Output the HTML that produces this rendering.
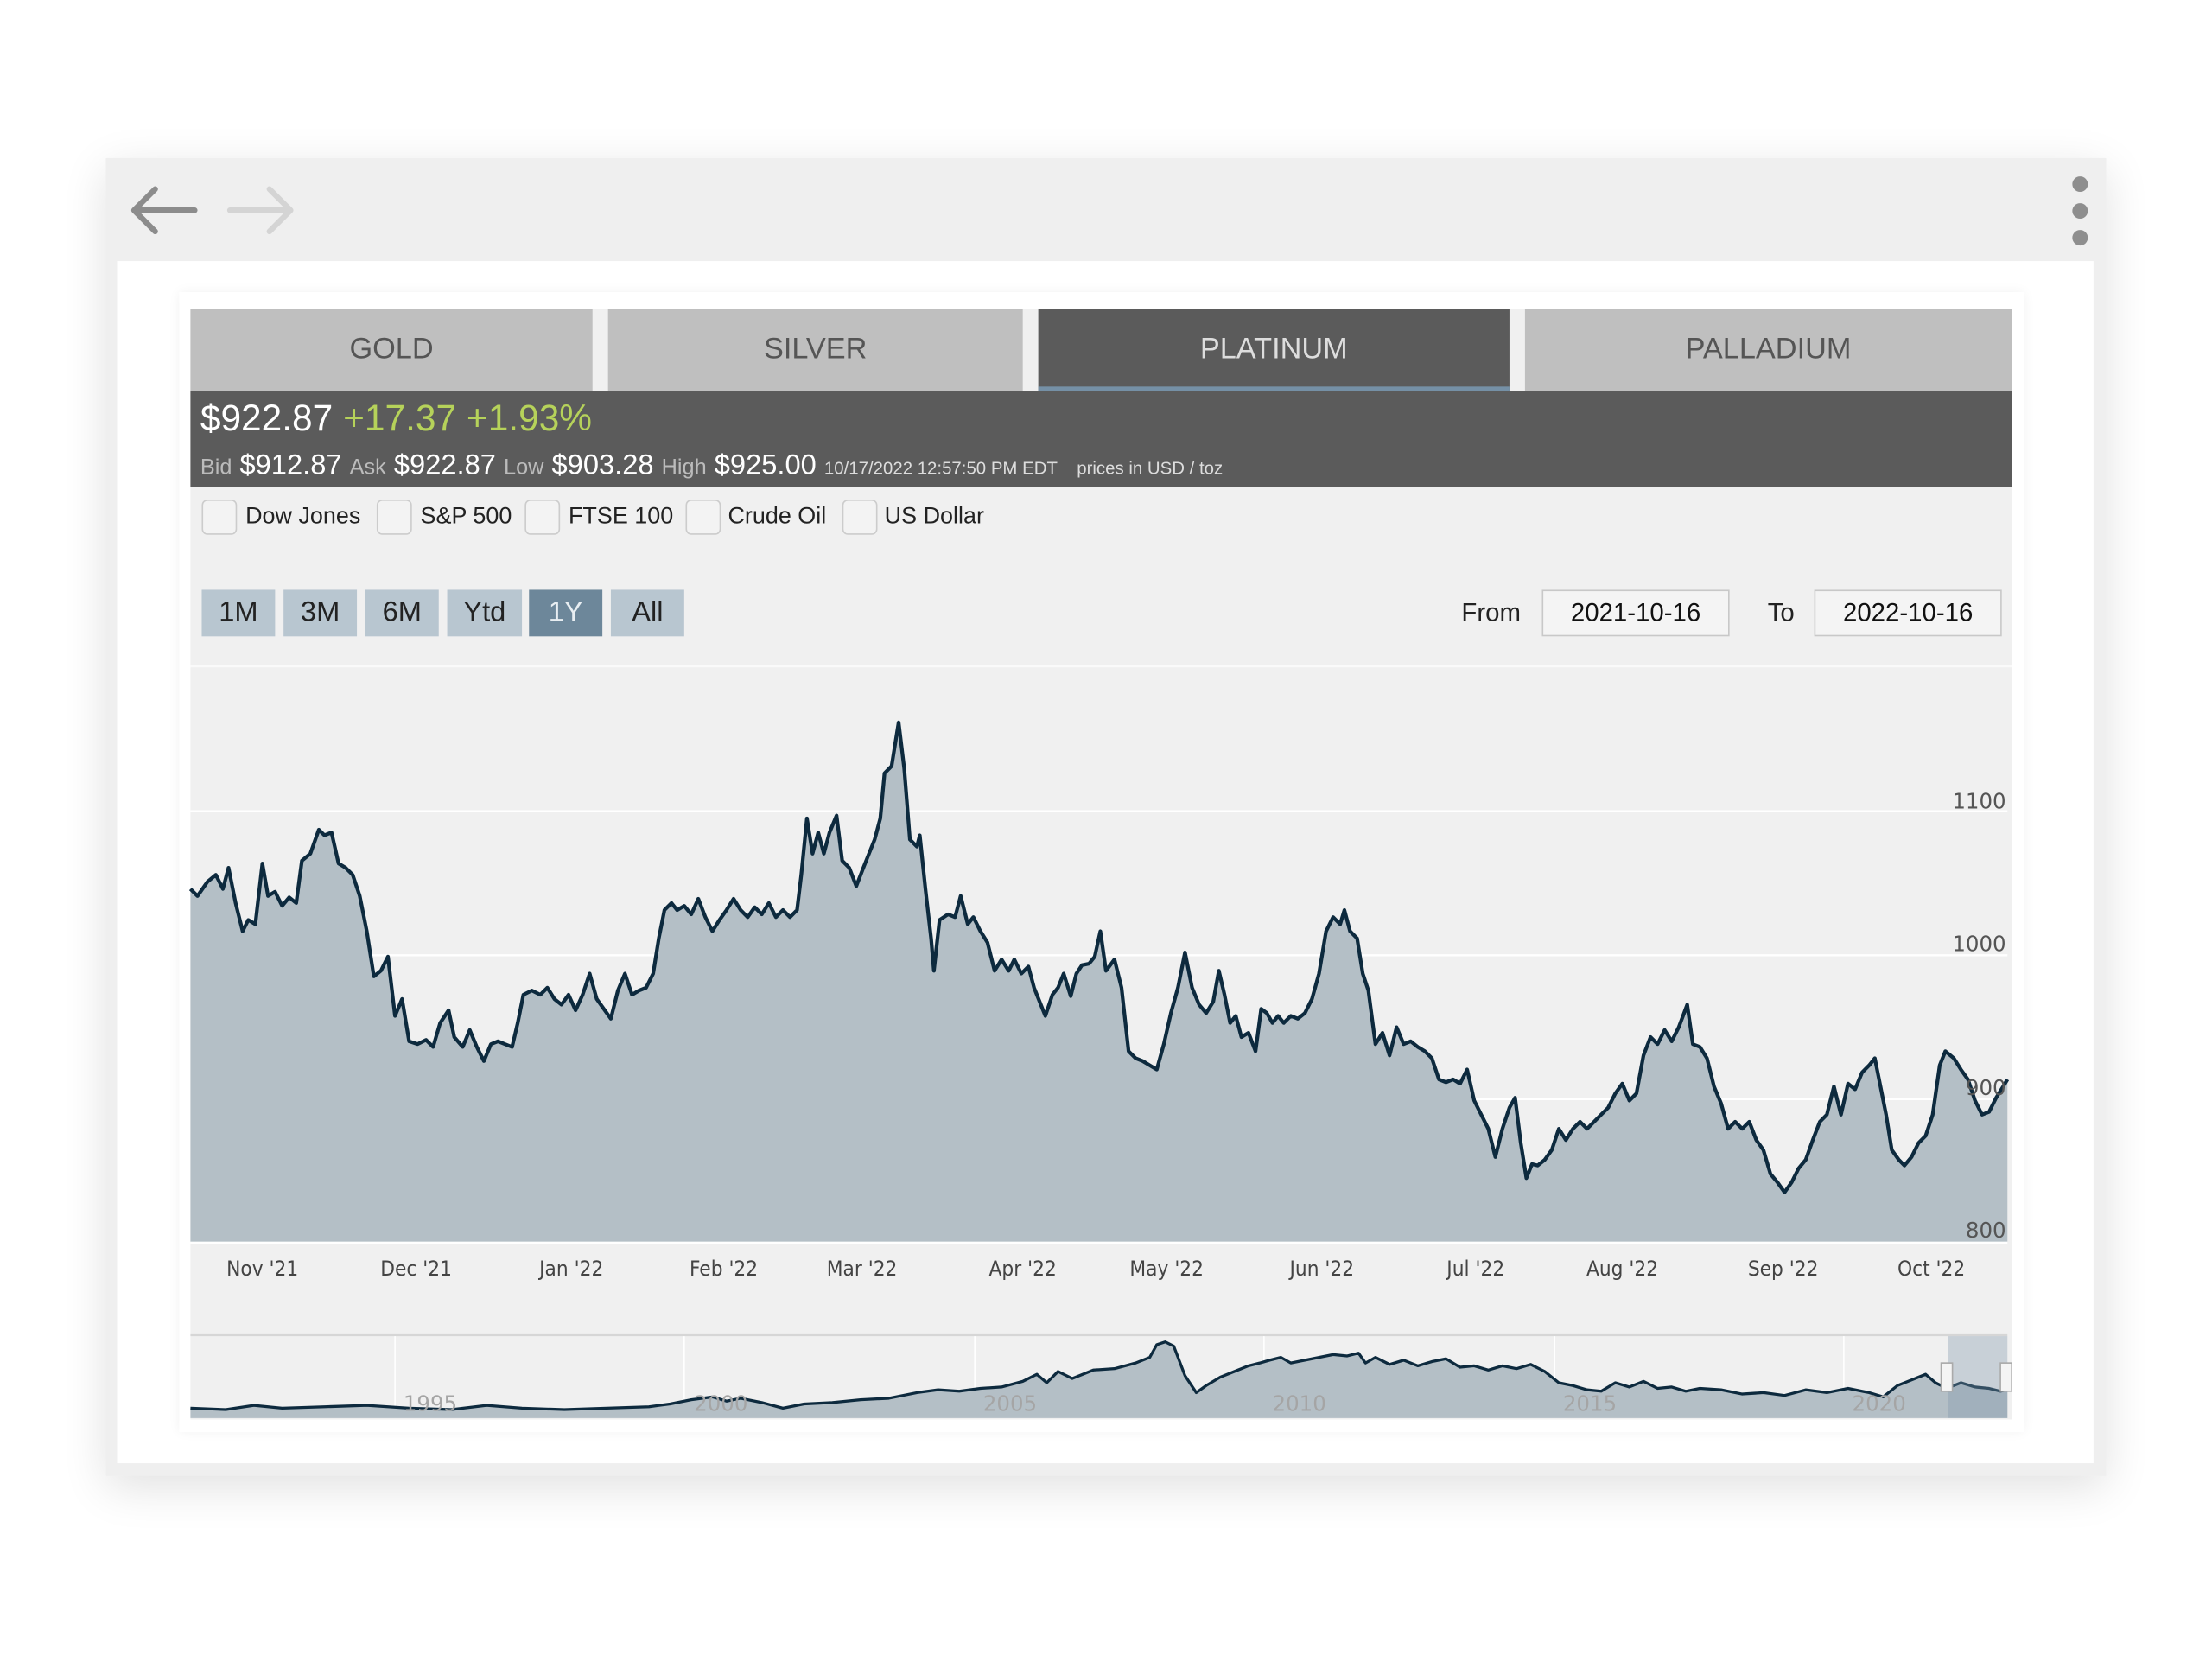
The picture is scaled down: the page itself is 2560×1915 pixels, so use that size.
<!DOCTYPE html>
<html><head><meta charset="utf-8"><style>
*{margin:0;padding:0;box-sizing:border-box}
html,body{width:2560px;height:1914px;overflow:hidden;background:#fff}
#s{position:absolute;left:0;top:0;width:1568px;height:1173px;transform:scale(1.63265);transform-origin:0 0;font-family:"Liberation Sans",Arial,sans-serif}
.a{position:absolute}
.frame{left:75px;top:112px;width:1418px;height:934px;background:#efefef;box-shadow:0 8px 30px rgba(0,0,0,.12)}
.content{left:83px;top:185px;width:1401px;height:852px;background:#fff}
.widget{left:127px;top:207px;width:1308px;height:808px;background:#fff;box-shadow:0 0 8px rgba(0,0,0,.06)}
.panel{left:135px;top:219px;width:1291px;height:787px;background:#f0f0f0}
.tab{top:219px;height:58px;background:#bfbfbf;color:#555;font-size:21px;text-align:center;line-height:58px}
.bar{left:135px;top:277px;width:1291px;height:68px;background:#5b5b5b}
.cb{top:354px;width:25px;height:25px;border:1px solid #ccc;border-radius:4px;background:#f3f3f3}
.cl{top:357px;font-size:16.5px;color:#222}
.rb{top:418px;width:52px;height:33px;background:#b8c6d0;color:#222;font-size:20px;text-align:center;line-height:33px}
.inp{top:418px;width:133px;height:33px;border:1px solid #c8c8c8;background:#f4f4f4;font-size:18px;text-align:center;line-height:31px;color:#111}
.xl{top:892px;font-family:"DejaVu Sans",sans-serif;font-size:14.5px;color:#444;transform:translateX(-50%) scaleX(.92);white-space:nowrap}
</style></head><body><div id="s">
<div class="a frame"></div>
<svg class="a" style="left:90px;top:128px" width="140" height="44" viewBox="0 0 140 44">
<path d="M48 21H6M20 6L5 21L20 36" stroke="#8c8c8c" stroke-width="4" fill="none" stroke-linecap="round" stroke-linejoin="round"/>
<path d="M73 21H115M101 6L116 21L101 36" stroke="#d4d4d4" stroke-width="4" fill="none" stroke-linecap="round" stroke-linejoin="round"/>
</svg>
<div class="a" style="left:1469px;top:125px;width:11px;height:11px;border-radius:50%;background:#8e8e8e"></div>
<div class="a" style="left:1469px;top:144px;width:11px;height:11px;border-radius:50%;background:#8e8e8e"></div>
<div class="a" style="left:1469px;top:163px;width:11px;height:11px;border-radius:50%;background:#8e8e8e"></div>
<div class="a content"></div>
<div class="a widget"></div>
<div class="a panel"></div>
<div class="a tab" style="left:135px;width:285px">GOLD</div>
<div class="a tab" style="left:431px;width:294px">SILVER</div>
<div class="a tab" style="left:736px;width:334px;background:#5b5b5b;color:#ddd;border-bottom:3px solid #7590a6">PLATINUM</div>
<div class="a tab" style="left:1081px;width:345px">PALLADIUM</div>
<div class="a bar"></div>
<div class="a" style="left:142px;top:281px;font-size:26px;color:#fff;white-space:nowrap">$922.87 <span style="color:#b6d25a">+17.37 +1.93%</span></div>
<div class="a" style="left:142px;top:319px;color:#fff;white-space:nowrap;font-size:20px"><span style="font-size:15.5px;color:#bbb">Bid</span> $912.87 <span style="font-size:15.5px;color:#bbb">Ask</span> $922.87 <span style="font-size:15.5px;color:#bbb">Low</span> $903.28 <span style="font-size:15.5px;color:#bbb">High</span> $925.00 <span style="font-size:12.5px;color:#ddd">10/17/2022 12:57:50 PM EDT &nbsp;&nbsp; prices in USD / toz</span></div>
<div class="a cb" style="left:143px"></div><div class="a cl" style="left:174px">Dow Jones</div>
<div class="a cb" style="left:267px"></div><div class="a cl" style="left:298px">S&amp;P 500</div>
<div class="a cb" style="left:372px"></div><div class="a cl" style="left:403px">FTSE 100</div>
<div class="a cb" style="left:486px"></div><div class="a cl" style="left:516px">Crude Oil</div>
<div class="a cb" style="left:597px"></div><div class="a cl" style="left:627px">US Dollar</div>
<div class="a rb" style="left:143px">1M</div>
<div class="a rb" style="left:201px">3M</div>
<div class="a rb" style="left:259px">6M</div>
<div class="a rb" style="left:317px;width:53px">Ytd</div>
<div class="a rb" style="left:375px;background:#6d879a;color:#e8eef2">1Y</div>
<div class="a rb" style="left:433px">All</div>
<div class="a" style="left:1036px;top:424px;font-size:18px;color:#222">From</div>
<div class="a inp" style="left:1093px">2021-10-16</div>
<div class="a" style="left:1253px;top:424px;font-size:18px;color:#222">To</div>
<div class="a inp" style="left:1286px">2022-10-16</div>
<div class="a" style="left:135px;top:471px;width:1291px;height:2px;background:#fafafa"></div>
<svg class="a" style="left:0;top:0" width="1568" height="1173" viewBox="0 0 1568 1173">
<g stroke="#fff" stroke-width="1.5"><line x1="135" y1="575" x2="1423" y2="575"/><line x1="135" y1="677" x2="1423" y2="677"/><line x1="135" y1="779" x2="1423" y2="779"/></g>
<path fill="#b4bfc6" stroke="none" d="M135 880 L135 630 L140 635 L147 625 L153 620 L158 630 L162 615 L167 640 L172 660 L176 652 L181 655 L186 612 L190 635 L195 632 L200 642 L205 636 L210 640 L214 610 L220 605 L226 588 L230 592 L235 590 L240 612 L245 615 L250 620 L255 635 L260 660 L265 692 L270 688 L275 678 L280 720 L285 708 L290 738 L296 740 L302 737 L307 742 L312 725 L318 716 L322 735 L328 742 L333 730 L338 742 L343 752 L348 740 L353 738 L358 740 L363 742 L367 725 L371 705 L377 702 L383 705 L388 700 L393 708 L398 712 L403 705 L408 716 L413 705 L418 690 L423 708 L428 715 L433 722 L438 702 L443 690 L448 705 L453 702 L458 700 L463 690 L467 665 L471 645 L476 640 L480 645 L485 642 L490 648 L495 637 L500 650 L505 660 L510 652 L515 645 L520 637 L525 645 L530 650 L535 643 L540 648 L545 640 L550 650 L555 645 L560 650 L565 645 L568 620 L572 580 L576 605 L580 590 L584 605 L588 590 L593 578 L597 610 L602 615 L607 628 L612 615 L616 605 L620 595 L624 580 L627 548 L632 543 L637 512 L641 545 L645 595 L650 600 L652 592 L656 630 L660 665 L662 688 L666 652 L672 648 L677 650 L681 635 L686 655 L690 650 L695 660 L700 668 L705 688 L710 680 L715 688 L719 680 L724 690 L729 685 L733 700 L737 710 L741 720 L746 705 L750 700 L754 690 L759 706 L763 690 L767 684 L772 683 L776 678 L780 660 L784 688 L790 680 L795 700 L800 745 L805 750 L810 752 L815 755 L820 758 L825 740 L830 718 L835 700 L840 675 L845 700 L850 712 L855 718 L860 710 L864 688 L868 705 L872 725 L876 720 L880 735 L885 732 L890 745 L894 715 L898 718 L902 725 L906 720 L910 725 L915 720 L920 722 L925 718 L930 708 L935 690 L940 660 L945 650 L950 655 L953 645 L957 660 L962 665 L966 690 L970 702 L975 740 L980 732 L985 748 L990 728 L995 740 L1000 738 L1005 742 L1010 745 L1015 750 L1020 765 L1025 767 L1030 765 L1035 768 L1040 758 L1045 780 L1050 790 L1055 800 L1060 820 L1065 800 L1070 785 L1074 778 L1078 810 L1082 835 L1086 825 L1090 826 L1095 822 L1100 815 L1105 800 L1110 808 L1115 800 L1120 795 L1125 800 L1130 795 L1135 790 L1140 785 L1145 775 L1150 768 L1155 780 L1160 775 L1165 748 L1170 735 L1175 740 L1180 730 L1185 738 L1190 728 L1196 712 L1200 740 L1205 742 L1210 750 L1215 770 L1220 782 L1225 800 L1230 795 L1235 800 L1240 795 L1245 808 L1250 815 L1255 832 L1260 838 L1265 845 L1270 838 L1275 828 L1280 822 L1285 808 L1290 795 L1295 790 L1300 770 L1305 790 L1310 768 L1315 772 L1320 760 L1325 755 L1329 750 L1333 770 L1337 790 L1341 815 L1346 822 L1350 826 L1355 820 L1360 810 L1365 805 L1370 790 L1375 755 L1379 745 L1385 750 L1390 758 L1395 765 L1400 780 L1405 790 L1410 788 L1415 778 L1420 770 L1423 765 L1423 880 Z"/>
<path fill="none" stroke="#0d2a3e" stroke-width="2.6" stroke-linejoin="round" d="M135 630 L140 635 L147 625 L153 620 L158 630 L162 615 L167 640 L172 660 L176 652 L181 655 L186 612 L190 635 L195 632 L200 642 L205 636 L210 640 L214 610 L220 605 L226 588 L230 592 L235 590 L240 612 L245 615 L250 620 L255 635 L260 660 L265 692 L270 688 L275 678 L280 720 L285 708 L290 738 L296 740 L302 737 L307 742 L312 725 L318 716 L322 735 L328 742 L333 730 L338 742 L343 752 L348 740 L353 738 L358 740 L363 742 L367 725 L371 705 L377 702 L383 705 L388 700 L393 708 L398 712 L403 705 L408 716 L413 705 L418 690 L423 708 L428 715 L433 722 L438 702 L443 690 L448 705 L453 702 L458 700 L463 690 L467 665 L471 645 L476 640 L480 645 L485 642 L490 648 L495 637 L500 650 L505 660 L510 652 L515 645 L520 637 L525 645 L530 650 L535 643 L540 648 L545 640 L550 650 L555 645 L560 650 L565 645 L568 620 L572 580 L576 605 L580 590 L584 605 L588 590 L593 578 L597 610 L602 615 L607 628 L612 615 L616 605 L620 595 L624 580 L627 548 L632 543 L637 512 L641 545 L645 595 L650 600 L652 592 L656 630 L660 665 L662 688 L666 652 L672 648 L677 650 L681 635 L686 655 L690 650 L695 660 L700 668 L705 688 L710 680 L715 688 L719 680 L724 690 L729 685 L733 700 L737 710 L741 720 L746 705 L750 700 L754 690 L759 706 L763 690 L767 684 L772 683 L776 678 L780 660 L784 688 L790 680 L795 700 L800 745 L805 750 L810 752 L815 755 L820 758 L825 740 L830 718 L835 700 L840 675 L845 700 L850 712 L855 718 L860 710 L864 688 L868 705 L872 725 L876 720 L880 735 L885 732 L890 745 L894 715 L898 718 L902 725 L906 720 L910 725 L915 720 L920 722 L925 718 L930 708 L935 690 L940 660 L945 650 L950 655 L953 645 L957 660 L962 665 L966 690 L970 702 L975 740 L980 732 L985 748 L990 728 L995 740 L1000 738 L1005 742 L1010 745 L1015 750 L1020 765 L1025 767 L1030 765 L1035 768 L1040 758 L1045 780 L1050 790 L1055 800 L1060 820 L1065 800 L1070 785 L1074 778 L1078 810 L1082 835 L1086 825 L1090 826 L1095 822 L1100 815 L1105 800 L1110 808 L1115 800 L1120 795 L1125 800 L1130 795 L1135 790 L1140 785 L1145 775 L1150 768 L1155 780 L1160 775 L1165 748 L1170 735 L1175 740 L1180 730 L1185 738 L1190 728 L1196 712 L1200 740 L1205 742 L1210 750 L1215 770 L1220 782 L1225 800 L1230 795 L1235 800 L1240 795 L1245 808 L1250 815 L1255 832 L1260 838 L1265 845 L1270 838 L1275 828 L1280 822 L1285 808 L1290 795 L1295 790 L1300 770 L1305 790 L1310 768 L1315 772 L1320 760 L1325 755 L1329 750 L1333 770 L1337 790 L1341 815 L1346 822 L1350 826 L1355 820 L1360 810 L1365 805 L1370 790 L1375 755 L1379 745 L1385 750 L1390 758 L1395 765 L1400 780 L1405 790 L1410 788 L1415 778 L1420 770 L1423 765"/>
<line x1="135" y1="881" x2="1423" y2="881" stroke="#fff" stroke-width="2"/>
<line x1="135" y1="946" x2="1423" y2="946" stroke="#d6d6d6" stroke-width="2"/>
<g stroke="#fff" stroke-width="1"><line x1="280" y1="947" x2="280" y2="1005"/><line x1="485" y1="947" x2="485" y2="1005"/><line x1="691" y1="947" x2="691" y2="1005"/><line x1="896" y1="947" x2="896" y2="1005"/><line x1="1102" y1="947" x2="1102" y2="1005"/><line x1="1307" y1="947" x2="1307" y2="1005"/></g>
<path id="nav" fill="#b4bfc6" stroke="none" d="M135 1005 L135 998 L160 999 L180 996 L200 998 L230 997 L260 996 L290 998 L320 999 L345 996 L370 998 L400 999 L430 998 L460 997 L475 995 L490 992 L505 990 L515 993 L525 991 L540 994 L555 998 L570 995 L590 994 L610 992 L630 991 L650 987 L665 985 L680 986 L695 984 L710 983 L725 979 L735 974 L742 980 L750 972 L760 977 L775 971 L790 970 L805 966 L815 962 L820 953 L826 951 L832 954 L840 975 L848 987 L855 982 L865 976 L875 972 L885 968 L893 966 L900 964 L908 962 L915 966 L925 964 L935 962 L945 960 L955 961 L963 959 L968 966 L975 962 L985 967 L995 964 L1005 968 L1015 965 L1025 963 L1035 969 L1045 968 L1055 971 L1065 968 L1075 970 L1085 967 L1095 972 L1105 980 L1115 982 L1125 985 L1135 986 L1145 980 L1155 983 L1165 979 L1175 984 L1185 983 L1195 986 L1205 984 L1220 985 L1235 988 L1250 987 L1265 989 L1280 985 L1295 987 L1310 984 L1325 987 L1335 990 L1345 982 L1355 978 L1365 974 L1372 980 L1380 984 L1390 980 L1400 983 L1410 984 L1418 986 L1423 985 L1423 1005 Z"/>
<path fill="none" stroke="#0d2a3e" stroke-width="2" stroke-linejoin="round" d="M135 998 L160 999 L180 996 L200 998 L230 997 L260 996 L290 998 L320 999 L345 996 L370 998 L400 999 L430 998 L460 997 L475 995 L490 992 L505 990 L515 993 L525 991 L540 994 L555 998 L570 995 L590 994 L610 992 L630 991 L650 987 L665 985 L680 986 L695 984 L710 983 L725 979 L735 974 L742 980 L750 972 L760 977 L775 971 L790 970 L805 966 L815 962 L820 953 L826 951 L832 954 L840 975 L848 987 L855 982 L865 976 L875 972 L885 968 L893 966 L900 964 L908 962 L915 966 L925 964 L935 962 L945 960 L955 961 L963 959 L968 966 L975 962 L985 967 L995 964 L1005 968 L1015 965 L1025 963 L1035 969 L1045 968 L1055 971 L1065 968 L1075 970 L1085 967 L1095 972 L1105 980 L1115 982 L1125 985 L1135 986 L1145 980 L1155 983 L1165 979 L1175 984 L1185 983 L1195 986 L1205 984 L1220 985 L1235 988 L1250 987 L1265 989 L1280 985 L1295 987 L1310 984 L1325 987 L1335 990 L1345 982 L1355 978 L1365 974 L1372 980 L1380 984 L1390 980 L1400 983 L1410 984 L1418 986 L1423 985"/>
<rect x="1381" y="947" width="42" height="58" fill="#7d95a8" fill-opacity=".35"/>
<rect x="1376" y="966" width="8" height="20" fill="#f4f4f4" stroke="#aaa"/>
<rect x="1418" y="966" width="8" height="20" fill="#f4f4f4" stroke="#aaa"/>
<g font-family="DejaVu Sans,sans-serif" font-size="15" fill="#a5a5a5" text-anchor="middle"><text x="305" y="1000">1995</text><text x="511" y="1000">2000</text><text x="716" y="1000">2005</text><text x="921" y="1000">2010</text><text x="1127" y="1000">2015</text><text x="1332" y="1000">2020</text></g>
<g font-family="DejaVu Sans,sans-serif" font-size="15" fill="#555" text-anchor="end"><text x="1422" y="573">1100</text><text x="1422" y="674">1000</text><text x="1422" y="776">900</text><text x="1422" y="877">800</text></g>
</svg>
<div class="a xl" style="left:186px">Nov '21</div>
<div class="a xl" style="left:295px">Dec '21</div>
<div class="a xl" style="left:405px">Jan '22</div>
<div class="a xl" style="left:513px">Feb '22</div>
<div class="a xl" style="left:611px">Mar '22</div>
<div class="a xl" style="left:725px">Apr '22</div>
<div class="a xl" style="left:827px">May '22</div>
<div class="a xl" style="left:937px">Jun '22</div>
<div class="a xl" style="left:1046px">Jul '22</div>
<div class="a xl" style="left:1150px">Aug '22</div>
<div class="a xl" style="left:1264px">Sep '22</div>
<div class="a xl" style="left:1369px">Oct '22</div>
</div></body></html>
